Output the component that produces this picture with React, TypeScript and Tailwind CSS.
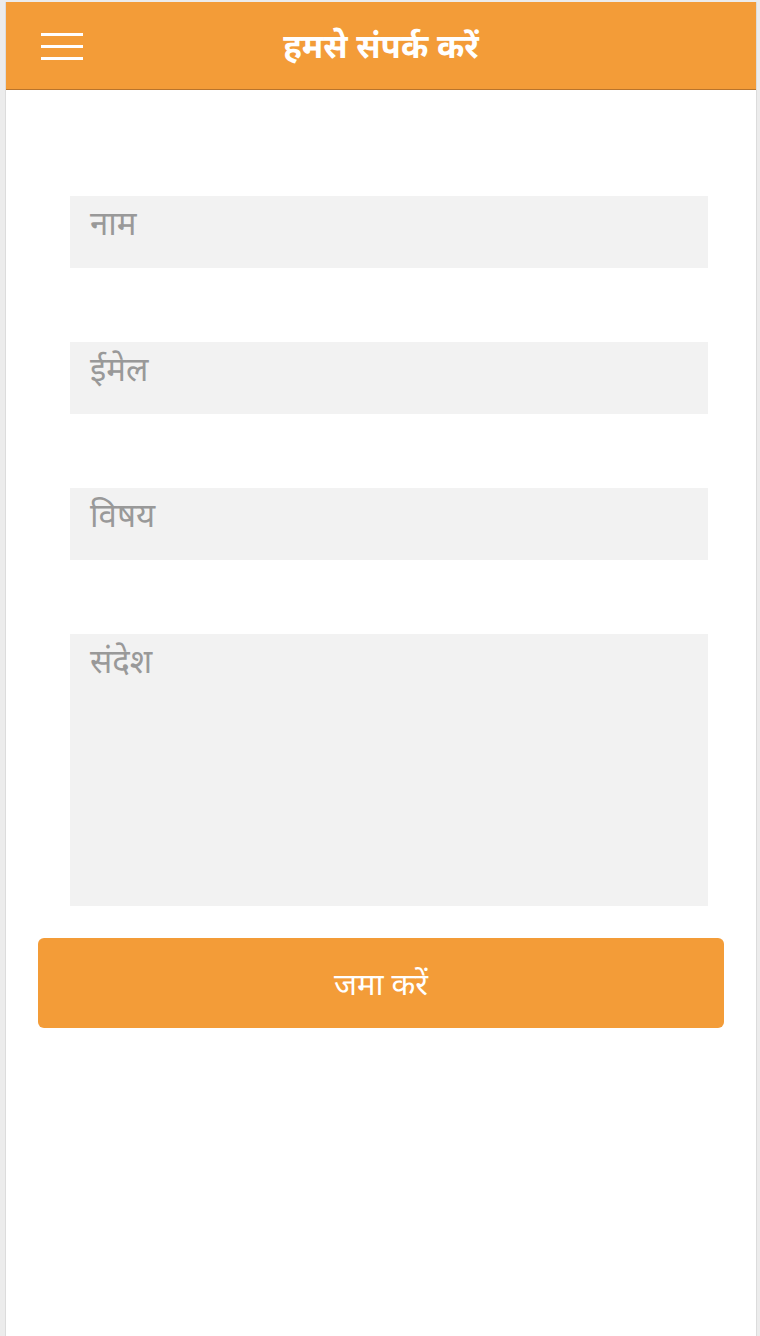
import React from "react";

export default function App() {
  const fields = [
    { label: "नाम", h: "h-[72px]" },
    { label: "ईमेल", h: "h-[72px]" },
    { label: "विषय", h: "h-[72px]" },
  ];
  return (
    <div
      className="min-h-[1336px] w-[760px] bg-[#ececec] pt-[2px] pl-[5px] pr-[3px]"
      style={{ fontFamily: '"Noto Sans", "Noto Sans Devanagari", "Lohit Devanagari", sans-serif' }}
    >
      <div className="min-h-[1334px] border-x border-[#dcdcdc] bg-white">
        <header className="relative flex h-[88px] items-center justify-center border-b border-[#b8742c] bg-[#f39c38]">
          <div className="absolute left-[35px] top-[31px] flex w-[42px] flex-col gap-[9px]">
            <span className="block h-[3px] w-full bg-white" />
            <span className="block h-[3px] w-full bg-white" />
            <span className="block h-[3px] w-full bg-white" />
          </div>
          <h1 className="text-[33px] font-bold leading-none text-white">हमसे संपर्क करें</h1>
        </header>
        <div className="flex flex-col pl-[64px] pr-[48px] pt-[106px]">
          {fields.map((f) => (
            <div key={f.label} className={`${f.h} mb-[74px] bg-[#f2f2f2] px-[20px] pt-[4px]`}>
              <span className="text-[33px] leading-[46px] text-[#999999]">{f.label}</span>
            </div>
          ))}
          <div className="h-[272px] bg-[#f2f2f2] px-[20px] pt-[4px]">
            <span className="text-[33px] leading-[46px] text-[#999999]">संदेश</span>
          </div>
        </div>
        <div className="px-[32px] pt-[32px]">
          <button className="flex h-[90px] w-full items-center justify-center rounded-[6px] bg-[#f39c38] text-[31px] text-white">
            जमा करें
          </button>
        </div>
      </div>
    </div>
  );
}
